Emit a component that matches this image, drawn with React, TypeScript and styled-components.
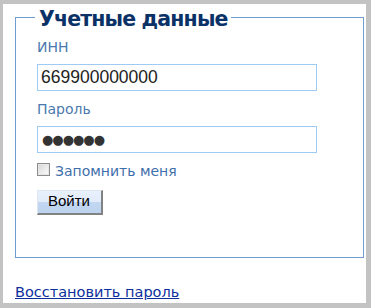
import React from "react";
import styled, { createGlobalStyle } from "styled-components";

const Global = createGlobalStyle`
  html, body { margin: 0; padding: 0; background: #ffffff; }
  * { box-sizing: border-box; }
`;

const Frame = styled.div`
  width: 371px;
  height: 308px;
  border-style: solid;
  border-color: #c3c3c3;
  border-width: 4px 5px 5px 3px;
  padding: 0 2px 0 12px;
  display: flex;
  flex-direction: column;
  font-family: "DejaVu Sans", Verdana, sans-serif;
`;

const Fieldset = styled.fieldset`
  margin: 0;
  border: 1px solid #6f9dcf;
  padding: 0 21px 42px 21px;
  min-width: 0;
`;

const Legend = styled.legend`
  margin-left: -2px;
  padding: 3px 3px 0 4px;
  font-family: "DejaVu Sans", Verdana, sans-serif;
  font-weight: bold;
  font-size: 20.5px;
  letter-spacing: -0.85px;
  line-height: 24px;
  color: #0b3267;
`;

const Label = styled.label<{ $top: number }>`
  display: block;
  margin: ${(p) => p.$top}px 0 8px;
  font-size: 14px;
  line-height: 17px;
  color: #4b79ae;
`;

const TextInput = styled.input`
  display: block;
  width: 280px;
  height: 27px;
  margin: 0;
  border: 1px solid #9fcaf3;
  padding: 0 3px;
  font-family: "Liberation Sans", Arial, sans-serif;
  font-size: 17.5px;
  color: #222222;
  background: #ffffff;
  outline: none;
`;

const SecretInput = styled(TextInput)`
  font-family: "DejaVu Sans", sans-serif;
  font-size: 13px;
  letter-spacing: -1px;
  color: #333333;
  padding-left: 4px;
`;

const CheckRow = styled.label`
  display: flex;
  align-items: flex-start;
  gap: 5px;
  margin-top: 10px;
  font-size: 14px;
  line-height: 17px;
  color: #3f6fab;
`;

const Check = styled.input`
  appearance: none;
  -webkit-appearance: none;
  width: 13px;
  height: 13px;
  margin: 0;
  flex: none;
  border: 1px solid #8c8c8c;
  background: linear-gradient(135deg, #d4d4d4 0%, #eeeeee 60%, #fafafa 100%);
  box-shadow: inset 0 0 0 1px #e6e6e6;
`;

const Button = styled.button`
  display: block;
  width: 66px;
  margin-top: 10px;
  padding: 1px 0 4px 10px;
  text-align: left;
  font-family: "Liberation Sans", Arial, sans-serif;
  font-size: 15px;
  line-height: 17px;
  color: #000000;
  border-style: solid;
  border-width: 1px 2px 2px 1px;
  border-color: #dfe6ee #828282 #828282 #dfe6ee;
  background: linear-gradient(to bottom, #e7f0fc 0%, #e2ecfa 50%, #c3d7f1 52%, #bcd2ee 100%);
  cursor: pointer;
`;

const Restore = styled.a`
  display: block;
  align-self: flex-start;
  margin-top: 26px;
  font-size: 14.5px;
  line-height: 17px;
  color: #0d2f9e;
  text-decoration: underline;
`;

export default function App() {
  return (
    <>
      <Global />
      <Frame>
        <Fieldset>
          <Legend>Учетные данные</Legend>
          <Label $top={8} htmlFor="inn">ИНН</Label>
          <TextInput id="inn" type="text" defaultValue="669900000000" />
          <Label $top={10} htmlFor="pwd">Пароль</Label>
          <SecretInput id="pwd" type="text" readOnly defaultValue="●●●●●●" />
          <CheckRow>
            <Check type="checkbox" />
            <span>Запомнить меня</span>
          </CheckRow>
          <Button type="button">Войти</Button>
        </Fieldset>
        <Restore href="#">Восстановить пароль</Restore>
      </Frame>
    </>
  );
}
